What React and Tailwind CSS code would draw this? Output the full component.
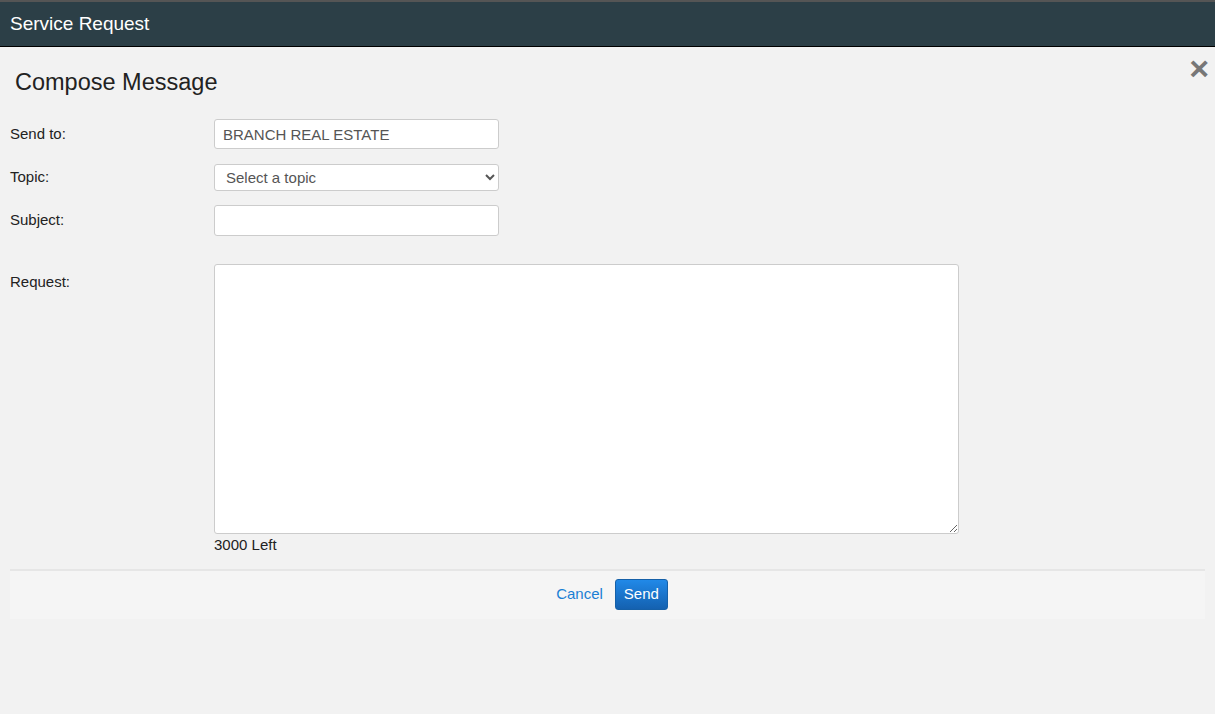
import { useState } from "react";

const font = { fontFamily: '"Liberation Sans", Arial, sans-serif' };

function Row({ label, children, className = "" }) {
    return (
        <div className={`flex items-center ${className}`}>
            <label className="w-[204px] shrink-0 text-[15px] text-[#222]">{label}</label>
            {children}
        </div>
    );
}

export default function App() {
    const [request, setRequest] = useState("");

    return (
        <main className="min-h-[714px] bg-[#f2f2f2]" style={font}>
            <header className="h-[47px] bg-[#2c3f47] border-t-2 border-t-[#555] border-b border-b-black flex items-center px-[10px]">
                <span className="text-white text-[19px]">Service Request</span>
            </header>

            <div className="relative px-[10px]">
                <button className="absolute right-[6px] top-[4px] text-[#777] text-[34px] font-bold leading-none">
                    ×
                </button>

                <h1 className="pl-[5px] pt-[22px] text-[23.5px] text-[#222] leading-[26px]">Compose Message</h1>

                <div className="mt-[24px] flex flex-col">
                    <Row label="Send to:">
                        <input
                            readOnly
                            value="BRANCH REAL ESTATE"
                            className="w-[285px] h-[30px] bg-white border border-[#ccc] rounded-[3px] px-[8px] text-[15px] text-[#555] outline-none"
                        />
                    </Row>
                    <Row label="Topic:" className="mt-[15px]">
                        <select className="w-[285px] h-[27px] bg-white border border-[#ccc] rounded-[3px] px-[7px] text-[15px] text-[#555] outline-none">
                            <option>Select a topic</option>
                        </select>
                    </Row>
                    <Row label="Subject:" className="mt-[14px]">
                        <input className="w-[285px] h-[31px] bg-white border border-[#ccc] rounded-[3px] px-[8px] text-[15px] outline-none" />
                    </Row>
                    <div className="flex items-start mt-[28px]">
                        <label className="w-[204px] shrink-0 text-[15px] text-[#222] pt-[7px]">Request:</label>
                        <div className="flex flex-col">
                            <textarea
                                value={request}
                                onChange={(e) => setRequest(e.target.value)}
                                maxLength={3000}
                                className="w-[745px] h-[270px] bg-white border border-[#ccc] rounded-[3px] p-[8px] text-[15px] outline-none block"
                            />
                            <span className="text-[15px] text-[#222]">{3000 - request.length} Left</span>
                        </div>
                    </div>
                </div>

                <div className="mt-[12px] h-[50px] bg-[#f5f5f5] border-t-2 border-t-[#e6e6e6] flex items-center justify-center gap-[12px] pl-[9px]">
                    <a href="#" className="text-[15px] text-[#1a7fd4]">Cancel</a>
                    <button className="h-[31px] px-[8px] rounded-[3px] border border-[#1560a8] text-white text-[15px] bg-gradient-to-b from-[#2189e8] to-[#1461b0]">
                        Send
                    </button>
                </div>
            </div>
        </main>
    );
}
